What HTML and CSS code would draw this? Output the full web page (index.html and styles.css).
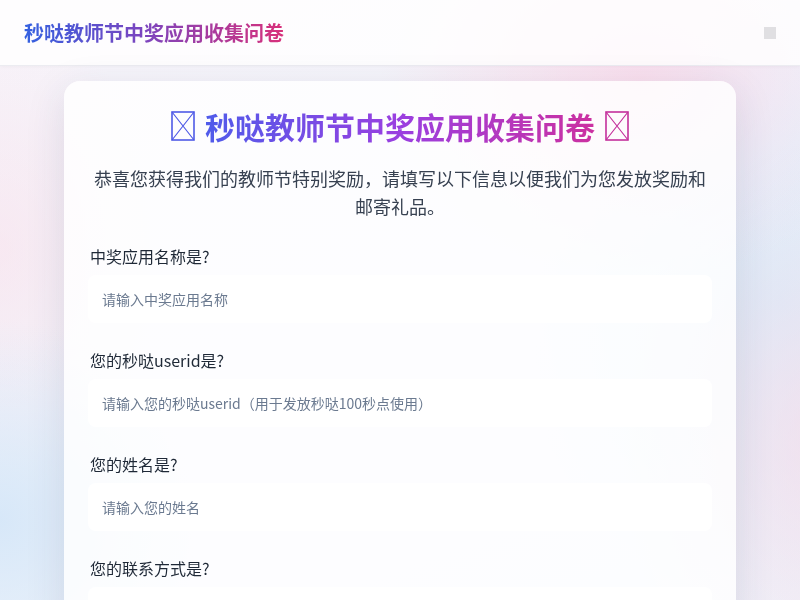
FILE: index.html
```html
<!DOCTYPE html>
<html lang="zh-CN">
<head>
<meta charset="utf-8">
<title>秒哒教师节中奖应用收集问卷</title>
<link rel="stylesheet" href="styles.css">
</head>
<body>
<div class="bg"></div>
<header class="topbar">
  <div class="brand">秒哒教师节中奖应用收集问卷</div>
  <span class="menu-btn"></span>
</header>
<main class="page">
  <section class="card">
    <h1 class="title">
      <svg class="tofu tofu-left" width="24" height="30" viewBox="0 0 24 30" aria-hidden="true"><rect x="1" y="1" width="22" height="28" fill="none" stroke="currentColor" stroke-width="1.6"/><path d="M1 1 L23 29 M23 1 L1 29" stroke="currentColor" stroke-width="1.2" fill="none"/></svg>
      <span class="title-text">秒哒教师节中奖应用收集问卷</span>
      <svg class="tofu tofu-right" width="24" height="30" viewBox="0 0 24 30" aria-hidden="true"><rect x="1" y="1" width="22" height="28" fill="none" stroke="currentColor" stroke-width="1.6"/><path d="M1 1 L23 29 M23 1 L1 29" stroke="currentColor" stroke-width="1.2" fill="none"/></svg>
    </h1>
    <p class="intro">恭喜您获得我们的教师节特别奖励，请填写以下信息以便我们为您发放奖励和邮寄礼品。</p>
    <form class="form">
      <div class="field">
        <label class="label">中奖应用名称是?</label>
        <input class="input" type="text" placeholder="请输入中奖应用名称">
      </div>
      <div class="field">
        <label class="label">您的秒哒userid是?</label>
        <input class="input" type="text" placeholder="请输入您的秒哒userid（用于发放秒哒100秒点使用）">
      </div>
      <div class="field">
        <label class="label">您的姓名是?</label>
        <input class="input" type="text" placeholder="请输入您的姓名">
      </div>
      <div class="field">
        <label class="label">您的联系方式是?</label>
        <input class="input" type="text" placeholder="请输入您的手机号码">
      </div>
      <div class="field">
        <label class="label">您的邮寄地址是?</label>
        <input class="input" type="text" placeholder="请输入您的详细邮寄地址">
      </div>
    </form>
  </section>
</main>
</body>
</html>
```
FILE: styles.css
```css
* { box-sizing: border-box; }
html, body { margin: 0; padding: 0; }
body {
  font-family: "Noto Sans CJK SC", "Noto Sans", sans-serif;
  color: #1f2937;
  background: #f6f7fb;
  min-height: 100vh;
}
.bg {
  position: fixed;
  inset: 0;
  z-index: -1;
  background:
    radial-gradient(ellipse 260px 200px at 640px 80px, rgba(252, 214, 232, 0.7), transparent),
    radial-gradient(ellipse 200px 300px at 820px 440px, rgba(250, 215, 230, 0.6), transparent),
    radial-gradient(ellipse 260px 320px at 780px 300px, rgba(214, 236, 250, 0.9), transparent),
    radial-gradient(ellipse 200px 200px at 0px 520px, rgba(212, 230, 248, 0.9), transparent),
    radial-gradient(ellipse 160px 240px at 0px 250px, rgba(250, 220, 232, 0.5), transparent),
    linear-gradient(160deg, #f7f4fa 0%, #f3f5fb 50%, #eef4fb 100%);
}
.topbar {
  height: 66px;
  display: flex;
  align-items: center;
  justify-content: space-between;
  padding: 0 24px;
  background: rgba(255, 255, 255, 0.82);
  border-bottom: 1px solid #ececf1;
  box-shadow: 0 1px 3px rgba(0, 0, 0, 0.03);
}
.brand {
  font-size: 20px;
  font-weight: 700;
  line-height: 28px;
  background: linear-gradient(90deg, #3461e0, #7a45c0 45%, #d8307a);
  -webkit-background-clip: text;
  background-clip: text;
  color: transparent;
}
.menu-btn {
  width: 12px;
  height: 12px;
  background: #e0dfe2;
}
.page {
  padding: 15px 64px 40px;
}
.card {
  background: rgba(255, 255, 255, 0.82);
  border-radius: 16px;
  padding: 24px 24px 32px;
  box-shadow: 0 10px 40px rgba(40, 50, 90, 0.12);
}
.title {
  margin: 0 0 17px;
  display: flex;
  justify-content: center;
  align-items: center;
  gap: 10px;
  font-size: 30px;
  line-height: 42px;
  font-weight: 700;
}
.title-text {
  background: linear-gradient(90deg, #4f5bea, #9a3fe0 50%, #cc30a0);
  -webkit-background-clip: text;
  background-clip: text;
  color: transparent;
}
.tofu { display: block; flex: none; }
.tofu-left { color: #4f5ae6; }
.tofu-right { color: #c4309c; }
.intro {
  margin: 0 0 24px;
  text-align: center;
  font-size: 18px;
  line-height: 28px;
  color: #374151;
}
.form {
  display: flex;
  flex-direction: column;
  gap: 25px;
}
.field {
  display: flex;
  flex-direction: column;
  gap: 7px;
}
.label {
  font-size: 16px;
  line-height: 24px;
  color: #1f2937;
  padding-left: 2px;
}
.input {
  height: 48px;
  border: 1px solid transparent;
  border-radius: 8px;
  background: #ffffff;
  padding: 0 13px;
  font-family: inherit;
  font-size: 14px;
  color: #1f2937;
  outline: none;
}
.input::placeholder {
  color: #6b7a90;
}
```
